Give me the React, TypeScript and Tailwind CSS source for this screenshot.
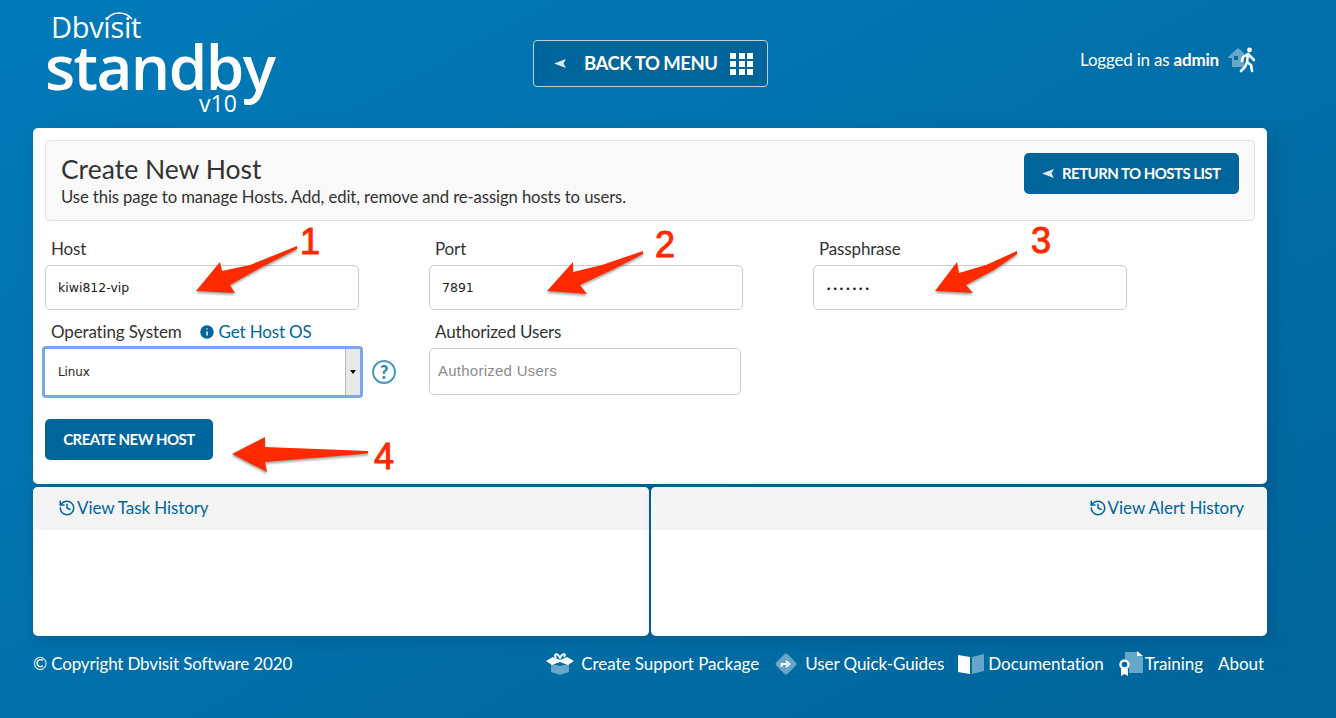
import { History, Info } from "lucide-react";

const labelFont = "font-['Lato',sans-serif]";

function ArrowHead() {
  return (
    <svg width="13" height="9" viewBox="0 0 13 9">
      <polygon points="0,4.5 12,0 9.5,4.5 12,9" fill="#dcebf3" />
    </svg>
  );
}

function GridIcon() {
  return (
    <div className="grid grid-cols-3 gap-[2px] w-[23px]">
      {Array.from({ length: 9 }, (_, i) => (
        <div key={i} className="w-[6px] h-[6px] bg-white" />
      ))}
    </div>
  );
}

function ExitIcon() {
  return (
    <svg width="28" height="26" viewBox="0 0 28 26">
      <path d="M1 10 L11 1 L17 6 L17 20 L5 20 L5 11 L1 11 Z" fill="#66a6c8" />
      <rect x="7" y="9" width="4" height="4" fill="#00699f" />
      <circle cx="22.5" cy="3" r="2.4" fill="#fff" />
      <path
        d="M21 7 L16 10 L15 14 M21 7 L24 10 L27 13 M21 7 L20 15 L24 18 L25 24 M20 15 L18 20 L14 24"
        stroke="#fff"
        strokeWidth="2.6"
        fill="none"
        strokeLinecap="round"
        strokeLinejoin="round"
      />
    </svg>
  );
}

function BoxIcon() {
  return (
    <svg width="28" height="22" viewBox="0 0 28 22">
      <path d="M5 11 L14 13 L23 11 L23 19 L14 22 L5 19 Z" fill="#66a6c8" />
      <path d="M0 8 L7 4 L14 7 L21 4 L28 8 L22 12 L14 9 L6 12 Z" fill="#fff" />
      <path
        d="M10 5 C7 0 12 0 14 5 C16 0 21 0 18 4"
        stroke="#fff"
        strokeWidth="1.8"
        fill="none"
      />
    </svg>
  );
}

function DiamondIcon() {
  return (
    <svg width="24" height="24" viewBox="0 0 24 24">
      <rect
        x="4"
        y="4"
        width="16"
        height="16"
        rx="2"
        transform="rotate(45 12 12)"
        fill="#66a6c8"
      />
      <path
        d="M7.5 15 L7.5 12 L13 12 M12 9 L15.5 12 L12 15"
        stroke="#fff"
        strokeWidth="1.8"
        fill="none"
      />
    </svg>
  );
}

function BookIcon() {
  return (
    <svg width="26" height="20" viewBox="0 0 26 20">
      <path d="M0 1 L12 3 L12 20 L0 18 Z" fill="#fff" />
      <path d="M14 3 L26 0 L26 17 L14 20 Z" fill="#66a6c8" />
    </svg>
  );
}

function CertIcon() {
  return (
    <svg width="24" height="26" viewBox="0 0 24 26">
      <path d="M6 1 L18 1 L24 6 L24 22 L10 22 L10 10 L6 8 Z" fill="#66a6c8" />
      <path d="M18 0 L24 5 L18 5 Z" fill="#fff" />
      <path d="M2 18 L2 25 L5.5 23 L9 25 L9 18 Z" fill="#fff" />
      <circle cx="5.5" cy="13.5" r="4" fill="#00699f" stroke="#fff" strokeWidth="2.4" />
    </svg>
  );
}

function RedArrow({ points, className }: { points: string; className: string }) {
  return (
    <svg
      className={`absolute ${className} drop-shadow-[0_2px_1px_rgba(0,0,0,0.35)]`}
      width="150"
      height="70"
      viewBox="0 0 150 70"
    >
      <polygon points={points} fill="#ff2a00" />
    </svg>
  );
}

function Annotation({ text, className }: { text: string; className: string }) {
  return (
    <span
      className={`absolute ${className} font-['Liberation_Sans',sans-serif] text-[36px] leading-none text-[#ff2a00] [-webkit-text-stroke:1px_#ff2a00]`}
    >
      {text}
    </span>
  );
}

function TextField({ value, className }: { value: string; className: string }) {
  return (
    <div
      className={`h-[45px] w-[314px] border border-[#cccccc] rounded-[5px] bg-white flex items-center pl-[12px] pt-[1px] text-[#222] font-['DejaVu_Sans',sans-serif] ${className}`}
    >
      {value}
    </div>
  );
}

export default function App() {
  return (
    <div
      className={`relative w-full h-[718px] overflow-hidden bg-gradient-to-br from-[#027ab9] to-[#00659a] ${labelFont}`}
    >
      {/* header */}
      <header className="relative h-[128px]">
        <div className="absolute left-[45px] top-[10px] text-white">
          <div className="relative font-['Open_Sans',sans-serif] text-[29px] leading-[34px] ml-[6px] tracking-[-0.3px]">
            Dbvisit
            <svg className="absolute left-[54px] top-[0px]" width="30" height="10" viewBox="0 0 30 10">
              <path d="M2 9 C8 1 20 1 27 9" stroke="#fff" strokeWidth="1.6" fill="none" />
            </svg>
          </div>
          <div className="font-['Open_Sans',sans-serif] text-[62px] leading-[44px] tracking-[-1.6px] font-semibold">
            standby
          </div>
          <div className="font-['Open_Sans',sans-serif] text-[23px] leading-[22px] ml-[154px] mt-[4px]">
            v10
          </div>
        </div>
        <div className="flex pt-[40px] pl-[533px]">
          <div className="w-[235px] h-[47px] border border-[#c5ccd0] rounded-[4px] bg-[#00659a] flex items-center pl-[20px] text-white">
            <ArrowHead />
            <span className="ml-[17px] text-[18.5px] font-bold tracking-[-0.5px]">BACK TO MENU</span>
            <div className="ml-[13px]">
              <GridIcon />
            </div>
          </div>
        </div>
        <div className="absolute right-[81px] top-[47px] flex items-center text-white text-[17px] tracking-[-0.2px]">
          <span>
            Logged in as <b>admin</b>
          </span>
          <div className="ml-[8px]">
            <ExitIcon />
          </div>
        </div>
      </header>

      {/* form card */}
      <main className="mx-[33px] w-[1234px] h-[356px] bg-white rounded-[5px] px-[12px] pt-[12px] shadow-[6px_6px_16px_rgba(0,50,90,0.25)]">
        <div className="h-[81px] border border-[#e3e3e3] rounded-[4px] bg-[#f9f9f9] flex items-start justify-between pl-[15px] pr-[15px]">
          <div className="text-[#333] pt-[12px]">
            <h1 className="text-[26.5px] leading-[33px]">Create New Host</h1>
            <p className="text-[16.7px] leading-[22px] tracking-[-0.1px]">
              Use this page to manage Hosts. Add, edit, remove and re-assign hosts to users.
            </p>
          </div>
          <div className="mt-[12px] w-[215px] h-[41px] bg-[#00659a] rounded-[5px] flex items-center pl-[18px] text-white">
            <ArrowHead />
            <span className="ml-[7px] text-[15px] font-bold tracking-[-0.55px]">RETURN TO HOSTS LIST</span>
          </div>
        </div>

        <div className="flex mt-[17px] text-[#333] text-[17px] tracking-[-0.15px]">
          <div className="w-[384px]">
            <div className="pl-[6px] h-[27px] leading-[22px]">Host</div>
            <TextField value="kiwi812-vip" className="text-[12.5px] tracking-[0]" />
          </div>
          <div className="w-[384px]">
            <div className="pl-[6px] h-[27px] leading-[22px]">Port</div>
            <TextField value="7891" className="text-[12.5px] tracking-[0]" />
          </div>
          <div>
            <div className="pl-[6px] h-[27px] leading-[22px]">Passphrase</div>
            <TextField value="•••••••" className="text-[9px] tracking-[1.1px] pt-[5px]" />
          </div>
        </div>

        <div className="flex mt-[11px] text-[#333] text-[17px] tracking-[-0.15px]">
          <div className="w-[384px]">
            <div className="pl-[6px] h-[27px] leading-[22px] flex items-start">
              <span>Operating System</span>
              <span className="ml-[16px] flex items-center text-[#00659a]">
                <Info size={18} fill="#00659a" stroke="#fff" className="mr-[3px]" />
                Get Host OS
              </span>
            </div>
            <div className="flex items-center -ml-[3px] -mt-[2px]">
              <div className="w-[321px] h-[52px] border-[3px] border-[#76a9ee] rounded-[4px] bg-white flex items-center justify-between overflow-hidden">
                <span className="pl-[13px] text-[12px] text-[#222] font-['DejaVu_Sans',sans-serif]">Linux</span>
                <div className="w-[15px] h-full bg-[#e9e9e9] border-l border-[#bbb] flex items-center justify-center">
                  <div className="w-0 h-0 border-x-[3.5px] border-x-transparent border-t-[4px] border-t-black" />
                </div>
              </div>
              <div className="ml-[9px] w-[24px] h-[24px] rounded-full border-2 border-[#4c9bc2] flex items-center justify-center text-[#2a86b4] text-[18px] font-black leading-none">
                ?
              </div>
            </div>
          </div>
          <div>
            <div className="pl-[6px] h-[27px] leading-[22px]">Authorized Users</div>
            <div className="h-[47px] w-[312px] border border-[#cccccc] rounded-[5px] bg-white flex items-center pl-[8px] text-[15px] tracking-[0.25px] text-[#8c8c8c] font-['Liberation_Sans',sans-serif]">
              Authorized Users
            </div>
          </div>
        </div>

        <div className="mt-[21px] w-[168px] h-[41px] bg-[#00659a] rounded-[5px] flex items-center justify-center text-white text-[15px] font-bold tracking-[-0.5px]">
          CREATE NEW HOST
        </div>
      </main>

      {/* history panels */}
      <section className="mx-[33px] mt-[3px] w-[1234px] flex gap-[2px] h-[149px]">
        <div className="flex-1 bg-white rounded-[5px] overflow-hidden shadow-[4px_4px_12px_rgba(0,50,90,0.25)]">
          <div className="h-[43px] pb-[1px] bg-[#f4f4f4] flex items-center pl-[25px] text-[#00659a] text-[17px] tracking-[-0.1px]">
            <History size={18} className="mr-[1px]" />
            View Task History
          </div>
        </div>
        <div className="flex-1 bg-white rounded-[5px] overflow-hidden shadow-[4px_4px_12px_rgba(0,50,90,0.25)]">
          <div className="h-[43px] pb-[1px] bg-[#f4f4f4] flex items-center justify-end pr-[23px] text-[#00659a] text-[17px] tracking-[-0.05px]">
            <History size={18} className="mr-[1px]" />
            View Alert History
          </div>
        </div>
      </section>

      {/* footer */}
      <footer className="mx-[33px] w-[1231px] mt-[16px] flex items-center justify-between text-white text-[17px] h-[24px]">
        <span className="tracking-[-0.15px]">© Copyright Dbvisit Software 2020</span>
        <div className="flex items-center tracking-[-0.05px]">
          <BoxIcon />
          <span className="ml-[7px]">Create Support Package</span>
          <span className="ml-[15px]">
            <DiamondIcon />
          </span>
          <span className="ml-[7px]">User Quick-Guides</span>
          <span className="ml-[14px]">
            <BookIcon />
          </span>
          <span className="ml-[4px]">Documentation</span>
          <span className="ml-[15px]">
            <CertIcon />
          </span>
          <span className="ml-[2px]">Training</span>
          <span className="ml-[15px]">About</span>
        </div>
      </footer>

      {/* red annotations drawn over the screenshot */}
      <RedArrow
        className="left-[190px] top-[240px]"
        points="6,51 30,22 32,31 60,25 107,6 107,9 70,28 40,45 45,53"
      />
      <RedArrow
        className="left-[540px] top-[240px]"
        points="7,51 33,22 33,32 62,25 103,11 103,14 72,30 40,45 47,54"
      />
      <RedArrow
        className="left-[928px] top-[240px]"
        points="7,51 29,22 31,33 58,25 89,11 89,14 66,30 38,45 45,53"
      />
      <RedArrow
        className="left-[226px] top-[425px]"
        points="6,29 39,12 39,22 142,26 142,28.5 39,37 41,47"
      />
      <Annotation text="1" className="left-[300px] top-[224px]" />
      <Annotation text="2" className="left-[655px] top-[227px]" />
      <Annotation text="3" className="left-[1031px] top-[223px]" />
      <Annotation text="4" className="left-[374px] top-[439px]" />
    </div>
  );
}
